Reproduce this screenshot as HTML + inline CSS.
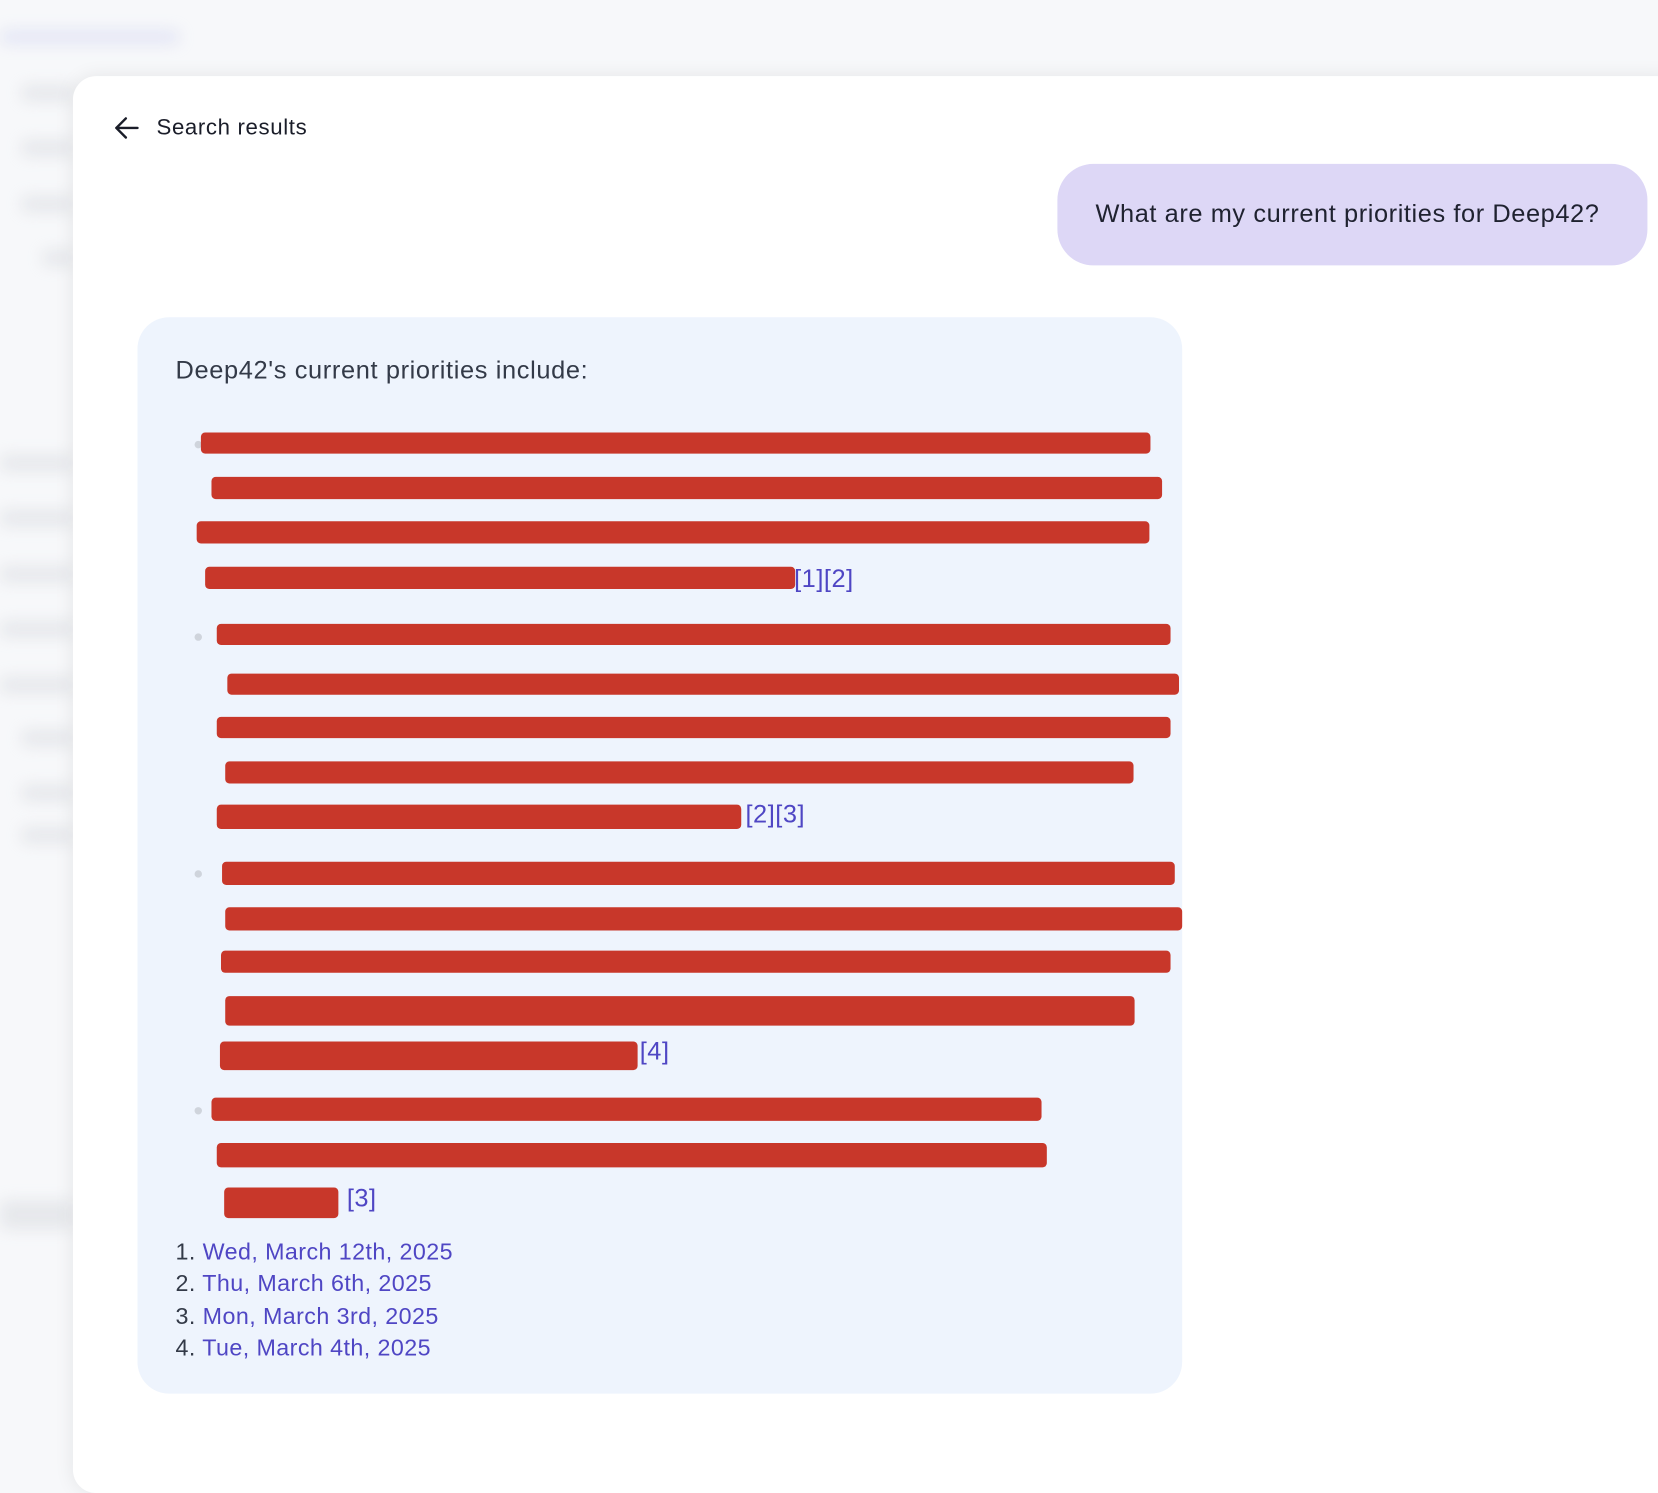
<!DOCTYPE html>
<html><head><meta charset="utf-8"><style>
*{margin:0;padding:0;box-sizing:border-box}
html,body{width:1658px;height:1406px;overflow:hidden;background:#f7f8fa;font-family:"Liberation Sans",sans-serif}
#w{position:absolute;left:0;top:0;width:1568px;height:1330px;transform:scale(1.0574);transform-origin:0 0}
.a{position:absolute}
.blur{position:absolute;background:#c9ccd3;filter:blur(7px);border-radius:6px;opacity:.35}
.card{left:69px;top:72px;width:1520px;height:1340px;background:#fff;border-radius:22px;box-shadow:0 0 18px rgba(0,0,0,.08)}
.r{position:absolute;background:#c8372a;border-radius:4px}
.c{position:absolute;color:#4f46c4;font-size:24px;line-height:24px;letter-spacing:.5px}
.dot{position:absolute;width:7px;height:7px;border-radius:50%;background:#cfd4dc}
.li{position:absolute;left:166px;font-size:22px;color:#333a48;letter-spacing:.4px}
.li span{color:#4f46c4}
</style></head><body><div id="w">
<div class="blur" style="left:0;top:28px;width:170px;height:14px;background:#c4c8ee"></div>
<div class="blur" style="left:20px;top:80px;width:50px;height:16px"></div>
<div class="blur" style="left:20px;top:132px;width:50px;height:16px"></div>
<div class="blur" style="left:20px;top:185px;width:50px;height:16px"></div>
<div class="blur" style="left:40px;top:236px;width:30px;height:16px"></div>
<div class="blur" style="left:0;top:430px;width:70px;height:16px"></div>
<div class="blur" style="left:0;top:482px;width:70px;height:16px"></div>
<div class="blur" style="left:0;top:535px;width:70px;height:16px"></div>
<div class="blur" style="left:0;top:587px;width:70px;height:16px"></div>
<div class="blur" style="left:0;top:640px;width:70px;height:16px"></div>
<div class="blur" style="left:20px;top:690px;width:50px;height:16px"></div>
<div class="blur" style="left:20px;top:742px;width:50px;height:16px"></div>
<div class="blur" style="left:20px;top:782px;width:50px;height:16px"></div>
<div class="blur" style="left:0;top:1135px;width:70px;height:28px"></div>
<div class="a card"></div>
<svg class="a" style="left:107px;top:109px" width="26" height="24" viewBox="0 0 26 24"><path d="M23 12H4M12 3L3 12l9 9" fill="none" stroke="#1a1d29" stroke-width="2.3" stroke-linecap="round" stroke-linejoin="round"/></svg>
<div class="a" style="left:148px;top:109px;font-size:21px;color:#1a1d29;letter-spacing:.6px">Search results</div>
<div class="a" style="left:1000px;top:155px;width:558px;height:96px;background:#ddd7f6;border-radius:34px"></div>
<div class="a" style="left:1036px;top:189px;font-size:24px;color:#1f2230;letter-spacing:.55px">What are my current priorities for Deep42?</div>
<div class="a" style="left:130px;top:300px;width:988px;height:1018px;background:#eef4fd;border-radius:30px"></div>
<div class="a" style="left:166px;top:337px;font-size:24px;color:#333a48;letter-spacing:.6px">Deep42's current priorities include:</div>
<div class="dot" style="left:184px;top:417px"></div>
<div class="dot" style="left:184px;top:599px"></div>
<div class="dot" style="left:184px;top:823px"></div>
<div class="dot" style="left:184px;top:1047px"></div>
<div class="r" style="left:190px;top:409px;width:898px;height:20px"></div>
<div class="r" style="left:200px;top:451px;width:899px;height:21px"></div>
<div class="r" style="left:186px;top:493px;width:901px;height:21px"></div>
<div class="r" style="left:194px;top:536px;width:558px;height:21px"></div>
<div class="c" style="left:751px;top:536px">[1][2]</div>
<div class="r" style="left:205px;top:590px;width:902px;height:20px"></div>
<div class="r" style="left:215px;top:637px;width:900px;height:20px"></div>
<div class="r" style="left:205px;top:678px;width:902px;height:20px"></div>
<div class="r" style="left:213px;top:720px;width:859px;height:21px"></div>
<div class="r" style="left:205px;top:761px;width:496px;height:23px"></div>
<div class="c" style="left:705px;top:759px">[2][3]</div>
<div class="r" style="left:210px;top:815px;width:901px;height:22px"></div>
<div class="r" style="left:213px;top:858px;width:905px;height:22px"></div>
<div class="r" style="left:209px;top:899px;width:898px;height:21px"></div>
<div class="r" style="left:213px;top:942px;width:860px;height:28px"></div>
<div class="r" style="left:208px;top:985px;width:395px;height:27px"></div>
<div class="c" style="left:605px;top:983px">[4]</div>
<div class="r" style="left:200px;top:1038px;width:785px;height:22px"></div>
<div class="r" style="left:205px;top:1081px;width:785px;height:23px"></div>
<div class="r" style="left:212px;top:1123px;width:108px;height:29px"></div>
<div class="c" style="left:328px;top:1122px">[3]</div>
<div class="li" style="top:1171px">1. <span>Wed, March 12th, 2025</span></div>
<div class="li" style="top:1201px">2. <span>Thu, March 6th, 2025</span></div>
<div class="li" style="top:1232px">3. <span>Mon, March 3rd, 2025</span></div>
<div class="li" style="top:1262px">4. <span>Tue, March 4th, 2025</span></div>
</div></body></html>
